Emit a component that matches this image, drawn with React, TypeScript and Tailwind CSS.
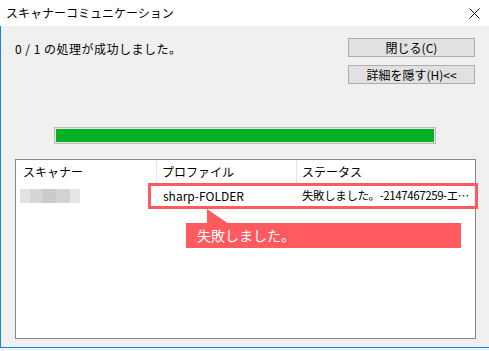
import React from 'react';

const jp = { fontFamily: '"Noto Sans CJK JP", "Noto Sans", sans-serif' };

function WinButton({ children }: { children: React.ReactNode }) {
  return (
    <button className="flex h-[19px] w-[127px] items-center justify-center border border-[#adadad] bg-[#e1e1e1] text-[12px] leading-none text-black">
      {children}
    </button>
  );
}

export default function App() {
  return (
    <div className="relative h-[351px] w-[489px] overflow-hidden bg-white text-black" style={jp}>
      {/* Title bar */}
      <div className="flex h-[26px] items-center justify-between bg-white pl-[6px] pr-[9px]">
        <span className="text-[12px]">スキャナーコミュニケーション</span>
        <svg width="11" height="11" viewBox="0 0 11 11" className="mt-[1px]">
          <path d="M0.5 0.5 L10.5 10.5 M10.5 0.5 L0.5 10.5" stroke="#111" strokeWidth="1" />
        </svg>
      </div>

      {/* Body */}
      <div className="flex h-[322px] flex-col border-b border-l border-[#1883d7] bg-[#f0f0f0] pl-[14px] pt-[12px]">
        <div className="flex w-[460px] items-start justify-between">
          <span className="mt-[2px] text-[12px] tracking-[0.5px]">0 / 1 の処理が成功しました。</span>
          <div className="flex flex-col gap-[8px]">
            <WinButton>閉じる(C)</WinButton>
            <WinButton>詳細を隠す(H)&lt;&lt;</WinButton>
          </div>
        </div>

        {/* Progress */}
        <div className="ml-[39px] mt-[43px] h-[17px] w-[382px] border border-[#bcbcbc] bg-[#e6e6e6] p-[1px]">
          <div className="h-full w-full bg-[#06b025]" />
        </div>

        {/* List */}
        <div className="relative mt-[15px] h-[180px] w-[461px] border border-[#828790] bg-white">
          <div className="flex h-[23px] items-center text-[12px]">
            <div className="w-[140px] shrink-0 pl-[7px]">スキャナー</div>
            <div className="h-full w-px shrink-0 bg-[#e5e5e5]" />
            <div className="w-[139px] shrink-0 pl-[5px] leading-[23px]">プロファイル</div>
            <div className="h-full w-px shrink-0 bg-[#e5e5e5]" />
            <div className="flex-1 pl-[5px] leading-[23px]">ステータス</div>
          </div>
          <div className="flex h-[25px] items-center text-[12px]">
            <div className="w-[141px] shrink-0 pl-[4px]">
              <div className="flex h-[14px] w-[60px]">
                <div className="w-[10px] bg-[#e2e2e2]" />
                <div className="w-[12px] bg-[#d6d6d6]" />
                <div className="w-[14px] bg-[#cbcbcb]" />
                <div className="w-[14px] bg-[#d2d2d2]" />
                <div className="w-[10px] bg-[#e6e6e6]" />
              </div>
            </div>
            <div className="w-[140px] shrink-0 pl-[6px]">sharp-FOLDER</div>
            <div className="flex-1 whitespace-nowrap pl-[5px] text-[11.5px] tracking-[-0.4px]">
              失敗しました。-2147467259-エ…
            </div>
          </div>

          {/* Highlight box */}
          <div className="absolute left-[132px] top-[23px] h-[26px] w-[330px] border-[3px] border-[#ff5a5f]" />

          {/* Callout */}
          <svg className="absolute left-[190px] top-[49px]" width="24" height="15" viewBox="0 0 24 15">
            <polygon points="1,0 1,15 23,15" fill="#ff5a5f" />
          </svg>
          <div className="absolute left-[170px] top-[63px] flex h-[25px] w-[275px] items-center bg-[#ff5a5f] pl-[11px] text-[14px] text-white">
            失敗しました。
          </div>
        </div>
      </div>

      {/* Taskbar strip below */}
      <div className="h-[3px] bg-[#f4f4f4]" />
    </div>
  );
}
